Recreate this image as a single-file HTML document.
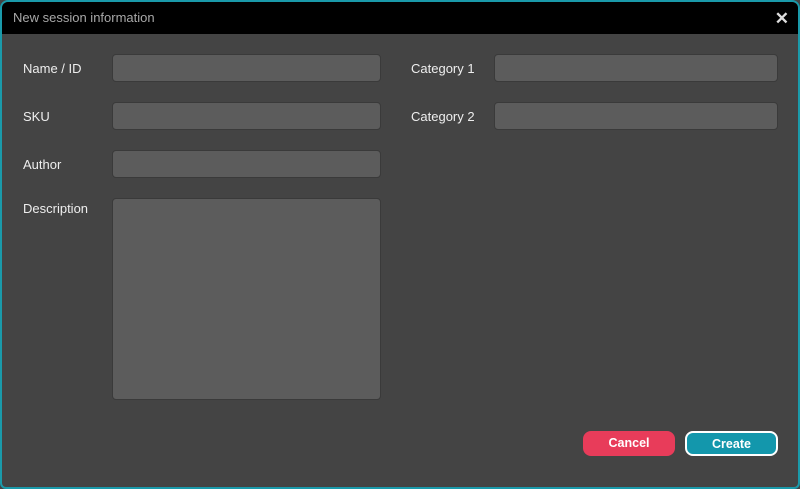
<!DOCTYPE html>
<html><head><style>
*{margin:0;padding:0;box-sizing:border-box}
html,body{width:800px;height:489px;background:#444;overflow:hidden;font-family:"Liberation Sans",sans-serif}
.win{position:absolute;left:0;top:0;width:800px;height:489px;border:2px solid #1a9aaa;border-radius:8px 8px 6px 6px;background:#444;overflow:hidden}
.hdr{position:absolute;left:0;top:0;right:0;height:32px;background:#000;color:#a8a8a8;font-size:13px;line-height:32px;padding-left:11px}
.x{position:absolute;right:9px;top:1px;color:#ddd;font-size:17px;font-weight:bold;line-height:32px}
.lbl{position:absolute;color:#eee;font-size:13px}
.in{position:absolute;background:#5c5c5c;border:1px solid #3a3a3a;border-radius:4px}
.btn{position:absolute;height:25px;border-radius:8px;color:#fff;font-weight:bold;font-size:12.5px;text-align:center;line-height:25px}
</style></head><body>
<div class="win">
<div class="hdr">New session information<span class="x">✕</span></div>
<div class="lbl" style="left:21px;top:59px">Name / ID</div>
<div class="in" style="left:110px;top:52px;width:269px;height:28px"></div>
<div class="lbl" style="left:21px;top:107px">SKU</div>
<div class="in" style="left:110px;top:100px;width:269px;height:28px"></div>
<div class="lbl" style="left:21px;top:155px">Author</div>
<div class="in" style="left:110px;top:148px;width:269px;height:28px"></div>
<div class="lbl" style="left:21px;top:199px">Description</div>
<div class="in" style="left:110px;top:196px;width:269px;height:202px"></div>
<div class="lbl" style="left:409px;top:59px">Category 1</div>
<div class="in" style="left:492px;top:52px;width:284px;height:28px"></div>
<div class="lbl" style="left:409px;top:107px">Category 2</div>
<div class="in" style="left:492px;top:100px;width:284px;height:28px"></div>
<div class="btn" style="left:581px;top:429px;width:92px;background:#e83c5a;border:0">Cancel</div>
<div class="btn" style="left:683px;top:429px;width:93px;background:#1397ac;border:2px solid #fff;line-height:22px">Create</div>
</div>
</body></html>
